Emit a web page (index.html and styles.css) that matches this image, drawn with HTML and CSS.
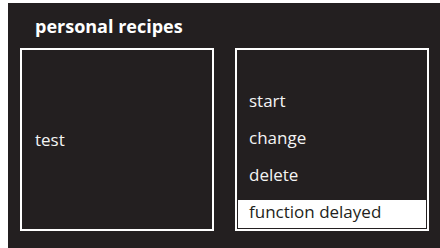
FILE: index.html
```html
<!DOCTYPE html>
<html>
<head>
<meta charset="utf-8">
<link rel="stylesheet" href="styles.css">
</head>
<body>
<div class="screen">
  <h1 class="title">personal recipes</h1>
  <div class="panels">
    <div class="box box-info">
      <span class="info-text">test</span>
    </div>
    <ul class="box menu">
      <li class="menu-item">start</li>
      <li class="menu-item">change</li>
      <li class="menu-item">delete</li>
      <li class="menu-item selected">function delayed</li>
    </ul>
  </div>
</div>
</body>
</html>
```

FILE: styles.css
```css
html, body {
  margin: 0;
  padding: 0;
  background: #ffffff;
}
body {
  width: 440px;
  height: 248px;
  overflow: hidden;
  font-family: "Open Sans", "Liberation Sans", sans-serif;
}
.screen {
  margin: 3px 0 0 8px;
  width: 432px;
  height: 245px;
  background: #231f20;
  color: #f4f4f4;
  box-sizing: border-box;
  padding: 13px 11px 0 12px;
}
.title {
  margin: 0 0 12px 15px;
  font-size: 18px;
  font-weight: 700;
  line-height: 20px;
  color: #ffffff;
}
.panels {
  display: flex;
  gap: 21px;
}
.box {
  width: 194px;
  height: 183px;
  box-sizing: border-box;
  border: 2px solid #ffffff;
  margin: 0;
}
.box-info {
  display: flex;
  align-items: center;
  padding-left: 13px;
}
.info-text {
  font-size: 17px;
}
.menu {
  list-style: none;
  padding: 1px;
  display: flex;
  flex-direction: column;
  justify-content: flex-end;
  gap: 9px;
}
.menu-item {
  height: 28px;
  line-height: 23px;
  padding-left: 11px;
  font-size: 17px;
}
.menu-item.selected {
  background: #ffffff;
  color: #231f20;
}
```
